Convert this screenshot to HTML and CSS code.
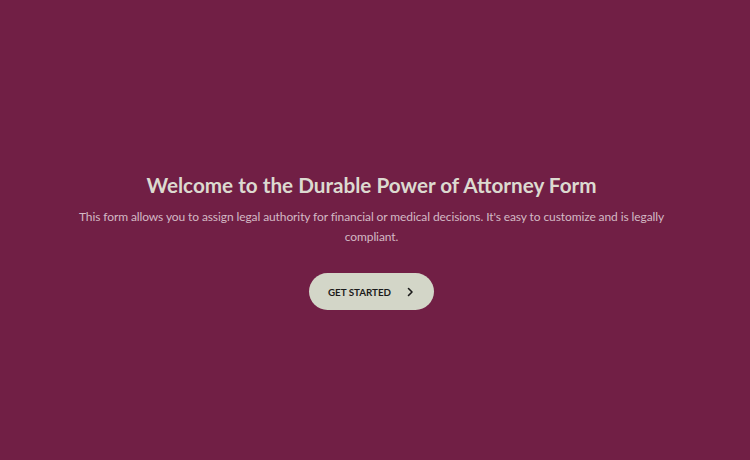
FILE: index.html
```html
<!DOCTYPE html>
<html>
<head>
<meta charset="utf-8">
<link rel="stylesheet" href="styles.css">
</head>
<body>
<main class="page">
  <section class="welcome">
    <h1 class="title">Welcome to the Durable Power of Attorney Form</h1>
    <p class="desc">This form allows you to assign legal authority for financial or medical decisions. It's easy to customize and is legally compliant.</p>
    <button class="start">
      <span class="start-label">GET STARTED</span>
      <svg class="start-icon" width="10" height="10" viewBox="0 0 10 10"><path d="M3.5 1.5 L7 5 L3.5 8.5" fill="none" stroke="#1b1b1b" stroke-width="1.6" stroke-linecap="round" stroke-linejoin="round"/></svg>
    </button>
  </section>
</main>
</body>
</html>
```
FILE: styles.css
```css
html, body {
  margin: 0;
  padding: 0;
  height: 100%;
}
body {
  background: #711f45;
  font-family: "Lato", "Liberation Sans", sans-serif;
}
.page {
  height: 460px;
  display: flex;
  align-items: flex-start;
  justify-content: center;
  box-sizing: border-box;
  padding-top: 171px;
}
.welcome {
  display: flex;
  flex-direction: column;
  align-items: center;
  width: 600px;
  margin-right: 7px;
  text-align: center;
}
.title {
  margin: 0;
  font-size: 20.7px;
  font-weight: 700;
  line-height: 28px;
  color: #dcdad0;
}
.desc {
  margin: 8px 0 0;
  font-size: 12px;
  letter-spacing: -0.1px;
  line-height: 20px;
  color: #d3b9c4;
}
.start {
  margin-top: 26px;
  display: flex;
  align-items: center;
  gap: 14px;
  height: 37px;
  padding: 0 19px 0 19px;
  border: none;
  border-radius: 19px;
  background: #d3d6c8;
  font-family: inherit;
  cursor: pointer;
}
.start-label {
  font-size: 9.8px;
  font-weight: 700;
  color: #1b1b1b;
}
.start-icon {
  display: block;
}
```
